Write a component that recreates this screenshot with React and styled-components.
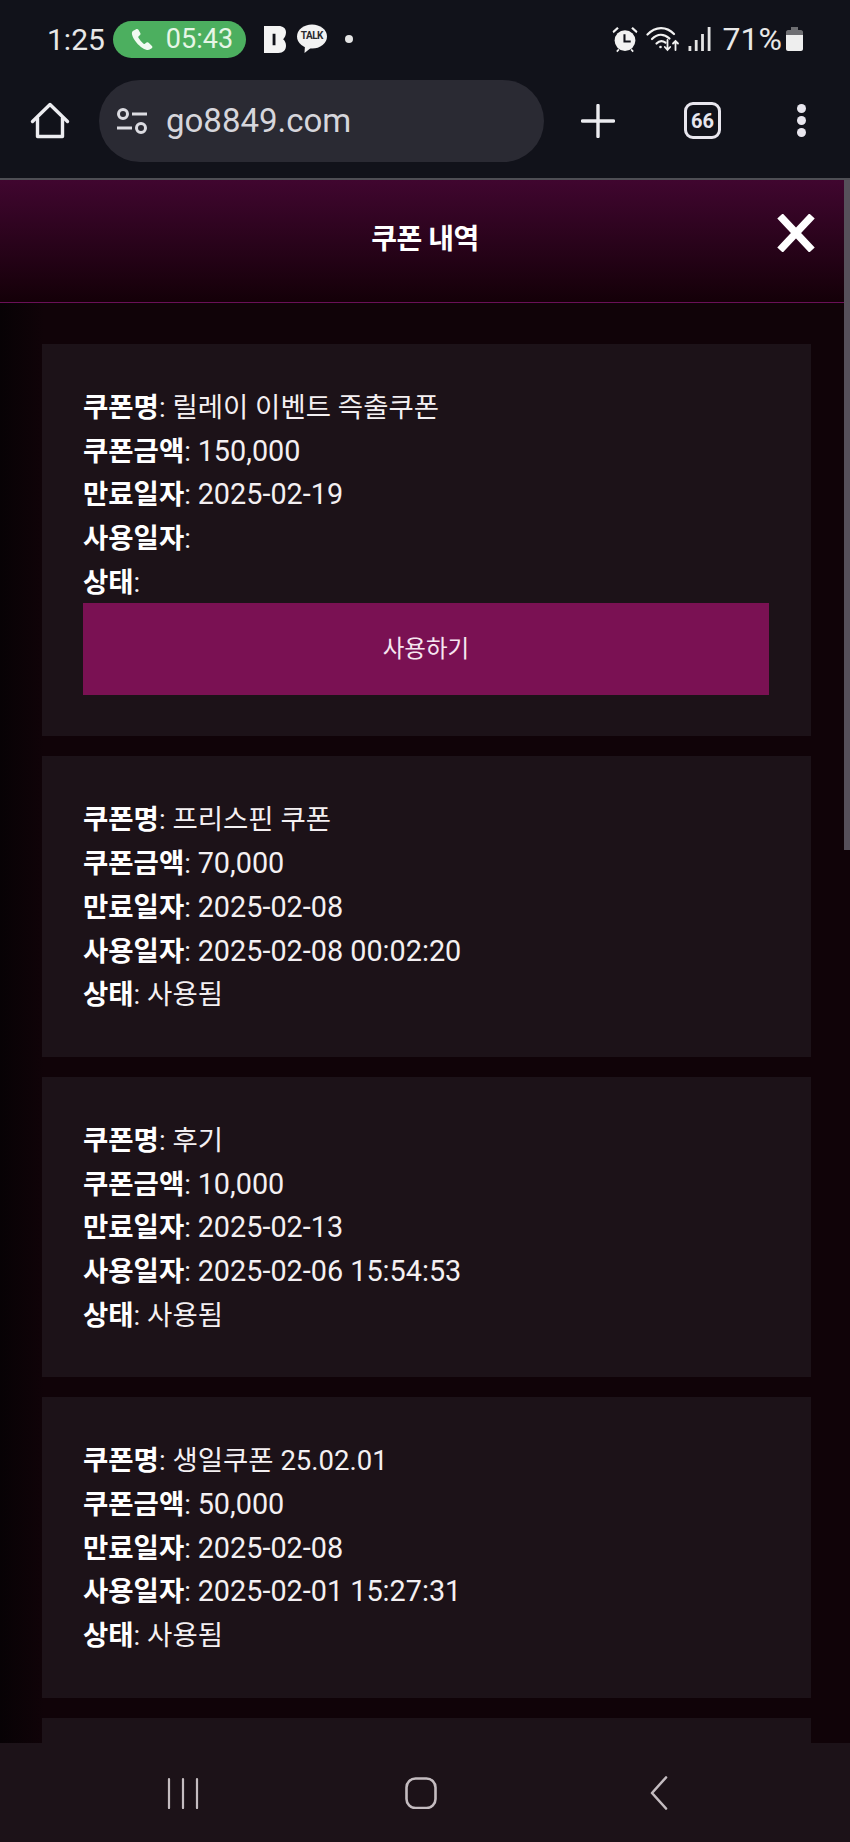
import React from 'react';
import styled, { createGlobalStyle } from 'styled-components';

const coupons = [
    { name: '릴레이 이벤트 즉출쿠폰', amount: '150,000', expires: '2025-02-19', used: '', status: '', usable: true },
    { name: '프리스핀 쿠폰', amount: '70,000', expires: '2025-02-08', used: '2025-02-08 00:02:20', status: '사용됨' },
    { name: '후기', amount: '10,000', expires: '2025-02-13', used: '2025-02-06 15:54:53', status: '사용됨' },
    { name: '생일쿠폰 25.02.01', amount: '50,000', expires: '2025-02-08', used: '2025-02-01 15:27:31', status: '사용됨' },
];

const HomeIcon = () => (
    <svg width="40" height="40" viewBox="0 0 40 40" fill="none" stroke="#ececf0" strokeWidth="3.4" strokeLinejoin="round" strokeLinecap="round">
        <path d="M2.5 20.5 20 3.5 37.5 20.5" />
        <path d="M7.5 17v18.5h25V17" />
    </svg>
);

const TuneIcon = () => (
    <svg width="32" height="28" viewBox="0 0 32 28" fill="none" stroke="#dcdce2" strokeWidth="3">
        <circle cx="7" cy="7" r="4.5" />
        <circle cx="25" cy="21" r="4.5" />
        <path d="M16 7h15M1 21h15" />
    </svg>
);

const PhoneIcon = () => (
    <svg width="23" height="23" viewBox="0 0 24 24" fill="#f2fbf2">
        <path d="M6.3 1.3 3 3C.8 4.6 2.300 9.500 6.700 15c4.300 5.300 10.300 8.700 13.300 7.800l2.700-1.800c.8-.7.9-1.500.2-2.300l-3.400-3.400c-.8-.7-1.500-.7-2.300-.1l-1.700 1.300c-.6.400-1.100.3-1.700-.2-2-1.700-3.700-3.700-5-6-.3-.6-.3-1.100.2-1.600l1.500-1.500c.6-.8.6-1.500.1-2.300L8.800 1.700C8 .8 7.200.8 6.300 1.300Z" />
    </svg>
);

const LogoB = () => (
    <svg width="22" height="27" viewBox="0 0 23 28">
        <path fill="#f4f4f4" d="M0 0h15c5 0 8 2.500 8 6.500 0 3-1.200 5.500-3 7.200 2 1.800 3 4 3 6.800 0 4.700-3 7.500-8 7.500H0Z" />
        <path fill="#11121a" d="M9 8h3v12H9Z" />
    </svg>
);

const TalkIcon = () => (
    <TalkBubble>
        <svg width="30" height="30" viewBox="0 0 30 30">
            <ellipse cx="15" cy="12.500" rx="15" ry="12" fill="#f2f2f2" />
            <path d="M8 21 7.500 29 15 23Z" fill="#f2f2f2" />
        </svg>
        <TalkLabel>TALK</TalkLabel>
    </TalkBubble>
);

const AlarmIcon = () => (
    <svg width="26" height="27" viewBox="0 0 24 26" fill="#f2f2f2">
        <circle cx="12" cy="14" r="10" />
        <path d="M1 7 6 2.500 4.500 1 0 5ZM23 7 18 2.500 19.500 1 24 5ZM3.500 24l2-2 1.200 1.200-2 2ZM20.500 24l-2-2-1.200 1.200 2 2Z" />
        <path d="M11.500 8v7h6" fill="none" stroke="#11121a" strokeWidth="2" />
    </svg>
);

const WifiIcon = () => (
    <svg width="34" height="26" viewBox="0 0 34 26" fill="none" stroke="#f2f2f2" strokeWidth="2.200" strokeLinecap="round">
        <path d="M1.500 8.500C9.500 0 20.500 0 28 8" />
        <path d="M6 13c5.500-5.500 12-5.500 17.500-.5" />
        <path d="M10.500 17.500c3-3 6-3 9-.8" />
        <circle cx="14.500" cy="21" r="1.300" fill="#f2f2f2" stroke="none" />
        <path d="M21.500 14v10M18.800 21l2.700 3 2.700-3M29.500 24V15M27 17.500l2.500-2.500 2.500 2.500" strokeWidth="1.800" />
    </svg>
);

const SignalIcon = () => (
    <svg width="23" height="24" viewBox="0 0 22 24" fill="#e4e4e4">
        <rect x="0" y="19" width="2.800" height="5" />
        <rect x="6.300" y="13" width="2.800" height="11" />
        <rect x="12.600" y="7" width="2.800" height="17" />
        <rect x="19.200" y="0" width="2.800" height="24" />
    </svg>
);

const BatteryIcon = () => (
    <svg width="17" height="24" viewBox="0 0 17 24">
        <path fill="#6e6e72" d="M5 0h7v3h3c1 0 2 1 2 2v4H0V5c0-1 1-2 2-2h3Z" />
        <path fill="#eeeeee" d="M0 8h17v14c0 1-1 2-2 2H2c-1 0-2-1-2-2Z" />
    </svg>
);

const PlusIcon = () => (
    <svg width="34" height="34" viewBox="0 0 34 34" stroke="#ececf0" strokeWidth="3.400" strokeLinecap="round">
        <path d="M17 1.500v31M1.500 17h31" />
    </svg>
);

const CloseIcon = () => (
    <svg width="38" height="38" viewBox="0 0 38 38" stroke="#ffffff" strokeWidth="7.500">
        <path d="M3 2 35 36M35 2 3 36" />
    </svg>
);

const RecentsIcon = () => (
    <svg width="34" height="32" viewBox="0 0 34 32" stroke="#c4bcc0" strokeWidth="2.200" strokeLinecap="round">
        <path d="M3 2v29M17 2v29M31 2v29" />
    </svg>
);

const HomeNavIcon = () => (
    <svg width="32" height="32" viewBox="0 0 32 32" fill="none" stroke="#c4bcc0" strokeWidth="2.600">
        <rect x="1.500" y="1.500" width="29" height="29.500" rx="9" />
    </svg>
);

const BackIcon = () => (
    <svg width="20" height="34" viewBox="0 0 20 34" fill="none" stroke="#c4bcc0" strokeWidth="2.600" strokeLinecap="round" strokeLinejoin="round">
        <path d="M17 1.500 3 17l14 15.500" />
    </svg>
);

const CouponCard = ({ coupon }) => (
    <Card>
        <Line><b>쿠폰명</b>: {coupon.name}</Line>
        <Line><b>쿠폰금액</b>: <Num>{coupon.amount}</Num></Line>
        <Line><b>만료일자</b>: <Num>{coupon.expires}</Num></Line>
        <Line><b>사용일자</b>: <Num>{coupon.used}</Num></Line>
        <Line><b>상태</b>: {coupon.status}</Line>
        {coupon.usable && <UseButton>사용하기</UseButton>}
    </Card>
);

const App = () => {
    return (
        <Screen>
            <GlobalStyle />
            <StatusBar>
                <StatusGroup>
                    <Clock>1:25</Clock>
                    <CallPill><PhoneIcon />05:43</CallPill>
                    <LogoSlot><LogoB /></LogoSlot>
                    <TalkIcon />
                    <Dot />
                </StatusGroup>
                <RightStatus>
                    <AlarmIcon />
                    <WifiIcon />
                    <SignalIcon />
                    <Battery>71%</Battery>
                    <BatteryIcon />
                </RightStatus>
            </StatusBar>
            <BrowserBar>
                <HomeIcon />
                <UrlBox><TuneIcon /><UrlText>go8849.com</UrlText></UrlBox>
                <PlusSlot><PlusIcon /></PlusSlot>
                <TabCount>66</TabCount>
                <MenuDots><i /><i /><i /></MenuDots>
            </BrowserBar>
            <Page>
                <Scrollbar />
                <Header>
                    <Title>쿠폰 내역</Title>
                    <CloseSlot><CloseIcon /></CloseSlot>
                </Header>
                <List>
                    {coupons.map((coupon, idx) => (
                        <CouponCard key={idx} coupon={coupon} />
                    ))}
                    <EmptyCard />
                </List>
            </Page>
            <NavBar>
                <RecentsIcon />
                <HomeNavIcon />
                <BackIcon />
            </NavBar>
        </Screen>
    );
};

const GlobalStyle = createGlobalStyle`
    html, body {
        margin: 0;
        padding: 0;
        background: #11121a;
    }
    * {
        box-sizing: border-box;
    }
`;

const Screen = styled.div`
    display: flex;
    flex-direction: column;
    width: 850px;
    height: 1842px;
    overflow: hidden;
    background-color: #11121a;
    font-family: Roboto, "Noto Sans CJK KR", sans-serif;
    color: #ffffff;
`;

const StatusBar = styled.div`
    display: flex;
    flex: none;
    height: 80px;
    padding: 19px 47px 0 47px;
    justify-content: space-between;
    align-items: flex-start;
`;

const StatusGroup = styled.div`
    display: flex;
    align-items: center;
    height: 40px;
`;

const RightStatus = styled(StatusGroup)`
    gap: 8px;
`;

const Clock = styled.div`
    font-size: 30px;
    color: #e8e8e8;
    margin-right: 8px;
`;

const CallPill = styled.div`
    display: flex;
    align-items: center;
    gap: 13px;
    width: 133px;
    height: 37px;
    padding-left: 17px;
    border-radius: 19px;
    background-color: #4caf5f;
    font-size: 27px;
    color: #e6f6e6;
`;

const LogoSlot = styled.div`
    display: flex;
    margin-left: 18px;
`;

const TalkBubble = styled.div`
    position: relative;
    width: 30px;
    height: 30px;
    margin-left: 11px;
`;

const TalkLabel = styled.span`
    position: absolute;
    left: 0;
    right: 0;
    top: 6px;
    text-align: center;
    font-size: 10px;
    font-weight: 700;
    letter-spacing: -0.5px;
    color: #2a2a2e;
`;

const Dot = styled.div`
    width: 8px;
    height: 8px;
    margin-left: 18px;
    border-radius: 50%;
    background-color: #e4e4e4;
`;

const Battery = styled.div`
    margin: 0 -4px 0 4px;
    font-size: 32px;
    color: #e8e8e8;
`;

const BrowserBar = styled.div`
    display: flex;
    flex: none;
    height: 98px;
    padding: 0 0 17px 30px;
    align-items: center;
`;

const UrlBox = styled.div`
    display: flex;
    align-items: center;
    gap: 18px;
    width: 445px;
    height: 82px;
    margin-left: 29px;
    padding-left: 17px;
    border-radius: 41px;
    background-color: #2a2a33;
`;

const UrlText = styled.div`
    font-size: 33px;
    color: #d6d6dc;
`;

const PlusSlot = styled.div`
    display: flex;
    margin-left: 37px;
`;

const TabCount = styled.div`
    display: flex;
    width: 37px;
    height: 37px;
    margin-left: 69px;
    align-items: center;
    justify-content: center;
    border: 3.500px solid #e8e6ee;
    border-radius: 9px;
    font-size: 20px;
    font-weight: 700;
    color: #e8e6ee;
`;

const MenuDots = styled.div`
    display: flex;
    flex-direction: column;
    gap: 3px;
    margin-left: 76px;

    i {
        width: 9px;
        height: 9px;
        border-radius: 50%;
        background-color: #e8e6ee;
    }
`;

const Page = styled.div`
    position: relative;
    flex: 1;
    min-height: 0;
    overflow: hidden;
    border-top: 2px solid #4e4e54;
    background: linear-gradient(90deg, #070205 0, #100308 44px);
`;

const Scrollbar = styled.div`
    position: absolute;
    top: 0;
    right: 0;
    z-index: 2;
    width: 6px;
    height: 670px;
    background-color: #56505a;
`;

const Header = styled.div`
    position: relative;
    display: flex;
    height: 123px;
    padding-bottom: 9px;
    align-items: center;
    justify-content: center;
    background: linear-gradient(180deg, #40062f 0, #140008 100%);
    border-bottom: 1px solid #6a1058;
`;

const Title = styled.div`
    font-size: 28px;
    font-weight: 700;
    letter-spacing: -0.5px;
`;

const CloseSlot = styled.div`
    position: absolute;
    right: 35px;
    top: 34px;
    display: flex;
`;

const List = styled.div`
    display: flex;
    flex-direction: column;
    gap: 20px;
    padding: 41px 39px 0 42px;
`;

const Card = styled.div`
    padding: 41px 42px 41px 41px;
    background-color: #1c1218;
    font-size: 27.500px;
    line-height: 45.700px;
    color: #f4f0f2;

    b {
        font-weight: 700;
        color: #ffffff;
    }
`;

const EmptyCard = styled(Card)`
    height: 300px;
    flex: none;
`;

const Line = styled.div`
    height: 43.700px;
    white-space: nowrap;
`;

const Num = styled.span`
    font-size: 28.800px;
`;

const UseButton = styled.div`
    display: flex;
    height: 92px;
    align-items: center;
    justify-content: center;
    background-color: #7a1153;
    font-size: 23.500px;
    color: #f6e6f0;
`;

const NavBar = styled.div`
    display: flex;
    flex: none;
    height: 99px;
    padding-left: 166px;
    gap: 205px;
    align-items: center;
    background-color: #1c1218;

    svg:last-child {
        margin-left: 7px;
    }
`;

export default App;
